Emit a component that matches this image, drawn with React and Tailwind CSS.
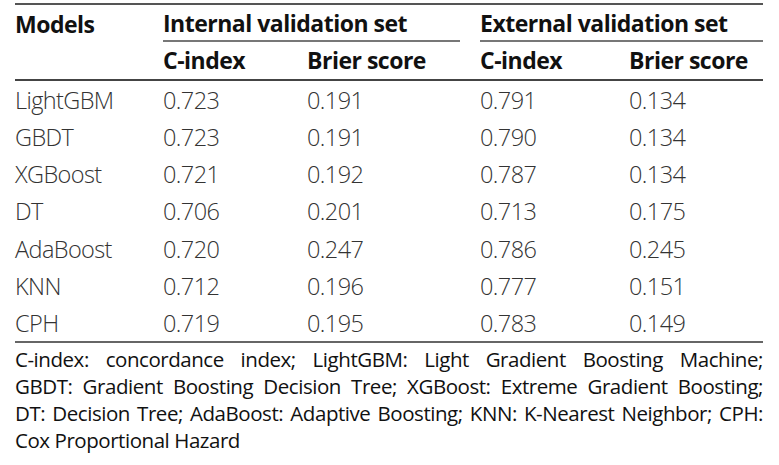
import React from "react";

const rows = [
  ["LightGBM", "0.723", "0.191", "0.791", "0.134"],
  ["GBDT", "0.723", "0.191", "0.790", "0.134"],
  ["XGBoost", "0.721", "0.192", "0.787", "0.134"],
  ["DT", "0.706", "0.201", "0.713", "0.175"],
  ["AdaBoost", "0.720", "0.247", "0.786", "0.245"],
  ["KNN", "0.712", "0.196", "0.777", "0.151"],
  ["CPH", "0.719", "0.195", "0.783", "0.149"],
];

const head = "text-[23px] font-bold leading-none tracking-[-0.5px] text-[#111]";

export default function App() {
  return (
    <div
      className="w-[779px] h-[465px] bg-white pt-[3px] pl-[15px] text-[#111]"
      style={{ fontFamily: '"Open Sans", sans-serif' }}
    >
      <div className="w-[748px]">
        <div className="h-[2px] bg-[#555]" />
        <div className="grid grid-cols-[148px_144px_173px_149px_134px]">
          <div className={"h-[37px] flex items-center pt-[1px] " + head}>Models</div>
          <div className="col-span-2 h-[37px] flex flex-col pr-[20px]">
            <div className={"flex-1 flex items-center pt-[1px] " + head}>Internal validation set</div>
            <div className="h-[2px] bg-[#777]" />
          </div>
          <div className="col-span-2 h-[37px] flex flex-col">
            <div className={"flex-1 flex items-center pt-[1px] " + head}>External validation set</div>
            <div className="h-[2px] bg-[#777]" />
          </div>
          <div className="h-[37px]" />
          {["C-index", "Brier score", "C-index", "Brier score"].map((t, i) => (
            <div key={i} className={"h-[37px] flex items-center " + head}>{t}</div>
          ))}
        </div>
        <div className="h-[2px] bg-[#444]" />
        <div className="grid grid-cols-[148px_144px_173px_149px_134px] text-[23.5px] font-light text-[#333] tracking-[-0.6px]">
          {rows.map((r, ri) =>
            r.map((c, ci) => (
              <div key={ri + "-" + ci} className="h-[37.2px] flex items-center pt-[2px] leading-none">{c}</div>
            ))
          )}
        </div>
        <div className="h-[2px] bg-[#666]" />
        <div className="text-[20.5px] leading-[27px] text-[#111] pt-[3px] tracking-[-0.45px]">
          <p className="text-justify [text-align-last:justify]">C-index: concordance index; LightGBM: Light Gradient Boosting Machine;</p>
          <p className="text-justify [text-align-last:justify]">GBDT: Gradient Boosting Decision Tree; XGBoost: Extreme Gradient Boosting;</p>
          <p className="text-justify [text-align-last:justify] [word-spacing:-3px]">DT: Decision Tree; AdaBoost: Adaptive Boosting; KNN: K-Nearest Neighbor; CPH:</p>
          <p>Cox Proportional Hazard</p>
        </div>
      </div>
    </div>
  );
}
